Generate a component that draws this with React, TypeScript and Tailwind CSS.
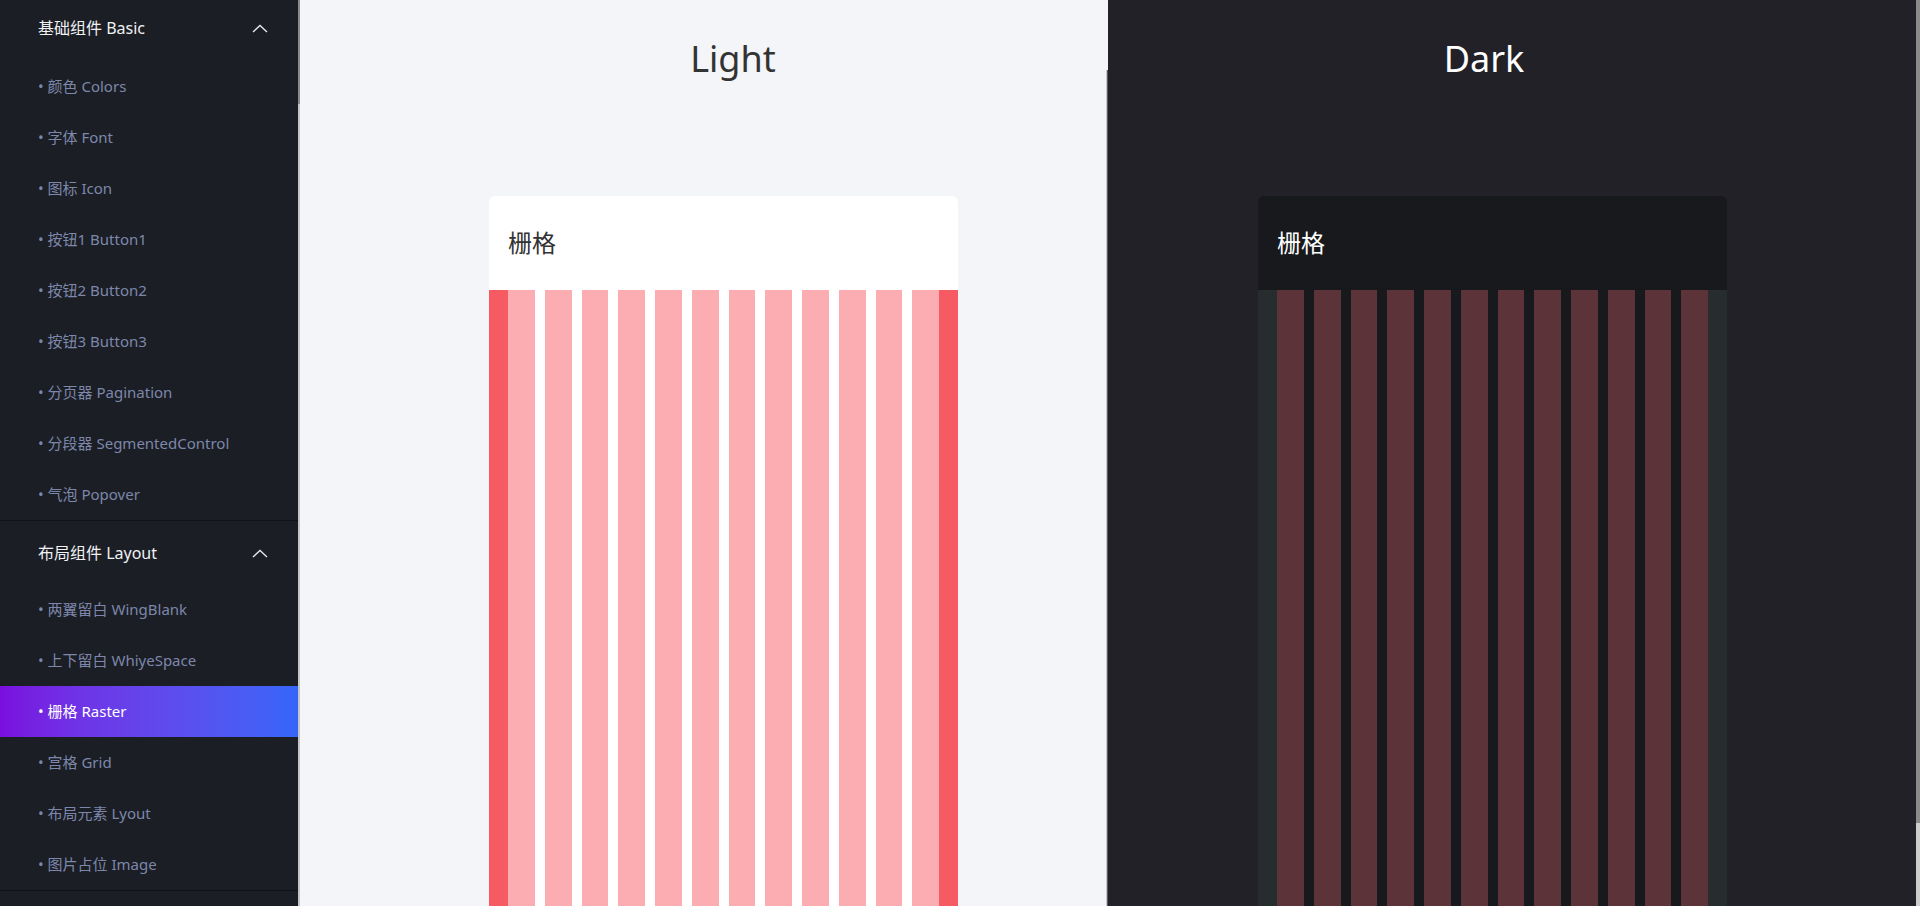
const basicItems = [
  "颜色 Colors",
  "字体 Font",
  "图标 Icon",
  "按钮1 Button1",
  "按钮2 Button2",
  "按钮3 Button3",
  "分页器 Pagination",
  "分段器 SegmentedControl",
  "气泡 Popover",
]

const layoutItems = [
  "两翼留白 WingBlank",
  "上下留白 WhiyeSpace",
  "栅格 Raster",
  "宫格 Grid",
  "布局元素 Lyout",
  "图片占位 Image",
]

const cols = Array.from({ length: 12 }, (_, i) => i)

function ChevronUp() {
  return (
    <svg width="16" height="9" viewBox="0 0 16 9" fill="none">
      <polyline points="1,8 8,1.5 15,8" stroke="#e5e7eb" strokeWidth="1.4" />
    </svg>
  )
}

function NavItem({ label, active }: { label: string; active?: boolean }) {
  return (
    <div
      className={`h-[51px] flex items-center pl-[38px] text-[15px] ${
        active
          ? "bg-gradient-to-r from-[#7a0ddf] to-[#3466f8] text-white"
          : "text-[#7d87ab]"
      }`}
    >
      • {label}
    </div>
  )
}

function Sidebar() {
  return (
    <div className="flex shrink-0">
      <div className="w-[298px] bg-[#1b1e24] flex flex-col">
        {/* Basic */}
        <div className="border-b border-[#111317]">
          <div className="h-[56px] flex items-center justify-between pl-[38px] pr-[30px]">
            <span className="text-[16px] text-[#f0f1f4]">基础组件 Basic</span>
            <ChevronUp />
          </div>
          <div className="pt-[5px]">
            {basicItems.map((it) => (
              <NavItem key={it} label={it} />
            ))}
          </div>
        </div>

        {/* Layout */}
        <div className="border-b border-[#111317]">
          <div className="mt-[4px] h-[56px] flex items-center justify-between pl-[38px] pr-[30px]">
            <span className="text-[16px] text-[#f0f1f4]">布局组件 Layout</span>
            <ChevronUp />
          </div>
          <div className="pt-[3px]">
            {layoutItems.map((it) => (
              <NavItem key={it} label={it} active={it === "栅格 Raster"} />
            ))}
          </div>
        </div>
      </div>
      {/* sidebar scrollbar */}
      <div className="w-[2px] bg-[#c6c6ca] flex flex-col">
        <div className="h-[104px] bg-[#8b8b8e]" />
      </div>
    </div>
  )
}

function RasterCard({ dark }: { dark?: boolean }) {
  return (
    <div
      className={`w-[469px] h-[800px] rounded-t-[6px] overflow-hidden flex flex-col ${
        dark ? "bg-[#17191c]" : "bg-white"
      }`}
    >
      <div
        className={`h-[94px] shrink-0 flex items-center pl-[19px] text-[24px] ${
          dark ? "text-white" : "text-[#333333]"
        }`}
      >
        栅格
      </div>
      <div className={`flex-1 px-[19px] ${dark ? "bg-[#272c2f]" : "bg-[#f65a63]"}`}>
        <div
          className={`h-full grid grid-cols-12 gap-x-[10px] ${dark ? "bg-[#17191c]" : "bg-white"}`}
        >
          {cols.map((c) => (
            <div key={c} className={dark ? "bg-[#5c3338]" : "bg-[#fbadb1]"} />
          ))}
        </div>
      </div>
    </div>
  )
}

export default function App() {
  return (
    <div className="w-[1920px] h-[906px] overflow-hidden flex font-['Noto_Sans','Noto_Sans_CJK_SC',sans-serif]">
      <Sidebar />

      {/* Light */}
      <div className="w-[806px] shrink-0 bg-[#f4f5f9] flex flex-col">
        <div className="pt-[41px] pl-[60px] text-center text-[36px] leading-none text-[#333333]">
          Light
        </div>
        <div className="mt-[119px] ml-[189px]">
          <RasterCard />
        </div>
      </div>
      {/* light panel scrollbar */}
      <div className="w-[2px] shrink-0 flex flex-col bg-[#212127]">
        <div className="h-[70px] bg-[#f4f5f9]" />
        <div className="flex-1 flex">
          <div className="w-px bg-[#c9c9cd]" />
          <div className="w-px bg-[#5a5a60]" />
        </div>
      </div>

      {/* Dark */}
      <div className="w-[808px] shrink-0 bg-[#212127] flex flex-col">
        <div className="pt-[41px] pr-[56px] text-center text-[36px] leading-none text-white">
          Dark
        </div>
        <div className="mt-[119px] ml-[150px]">
          <RasterCard dark />
        </div>
      </div>

      {/* page scrollbar */}
      <div className="w-[4px] shrink-0 bg-[#cdcdcd] flex flex-col">
        <div className="h-[823px] bg-[#8a8a8a]" />
      </div>
    </div>
  )
}
